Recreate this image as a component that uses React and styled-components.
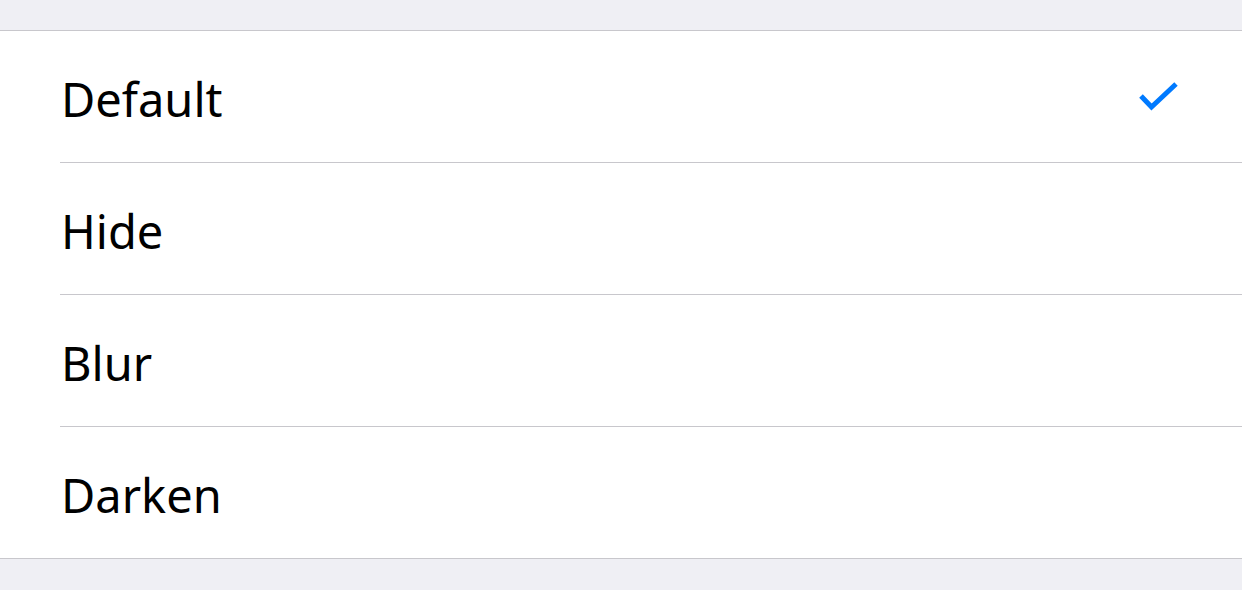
import styled, { createGlobalStyle } from "styled-components";

const GlobalStyle = createGlobalStyle`
  html, body {
    margin: 0;
    padding: 0;
    background: #efeff4;
  }
  body {
    font-family: "Noto Sans", "Open Sans", sans-serif;
  }
`;

const Page = styled.div`
  width: 1242px;
  height: 590px;
  background: #efeff4;
  padding-top: 30px;
  box-sizing: border-box;
`;

const Group = styled.div`
  background: #ffffff;
  border-top: 1px solid #c8c7cc;
  border-bottom: 1px solid #c8c7cc;
`;

const Row = styled.div`
  display: flex;
  align-items: center;
  height: 131px;
  padding-left: 61px;
  padding-right: 62px;
  position: relative;
  color: #000;
  font-size: 47px;

  &::after {
    content: "";
    display: ${(props) => (props.$last ? "none" : "block")};
    position: absolute;
    left: 60px;
    right: 0;
    bottom: -1px;
    height: 1px;
    background: #c8c7cc;
  }

  & + & {
    margin-top: 1px;
  }
`;

const Label = styled.span`
  flex: 1;
  line-height: 1;
  margin-top: 6px;
`;

const Check = () => (
  <svg width="44" height="34" viewBox="0 0 44 34">
    <path
      d="M5 16 L15.5 27 L40 4"
      fill="none"
      stroke="#007aff"
      strokeWidth="5"
      strokeLinecap="butt"
      strokeLinejoin="miter"
    />
  </svg>
);

const options = ["Default", "Hide", "Blur", "Darken"];

const App = () => {
  const selected = "Default";
  return (
    <Page>
      <GlobalStyle />
      <Group>
        {options.map((o, i) => (
          <Row key={o} $last={i === options.length - 1}>
            <Label>{o}</Label>
            {o === selected && <Check />}
          </Row>
        ))}
      </Group>
    </Page>
  );
};

export default App;
